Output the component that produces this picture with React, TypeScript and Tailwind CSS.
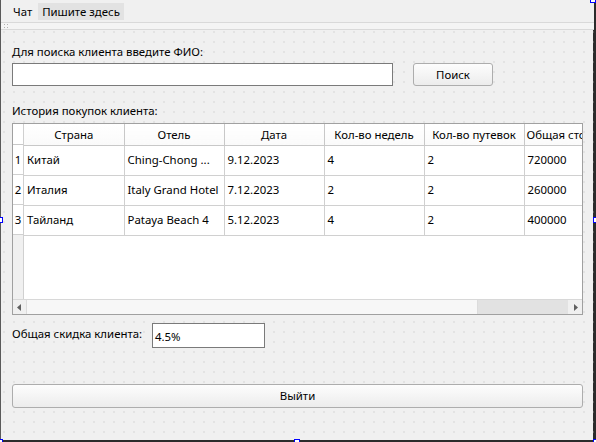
import React from 'react';

const rows = [
    { n: 1, country: 'Китай', hotel: 'Ching-Chong ...', date: '9.12.2023', weeks: '4', tickets: '2', total: '720000' },
    { n: 2, country: 'Италия', hotel: 'Italy Grand Hotel', date: '7.12.2023', weeks: '2', tickets: '2', total: '260000' },
    { n: 3, country: 'Тайланд', hotel: 'Pataya Beach 4', date: '5.12.2023', weeks: '4', tickets: '2', total: '400000' },
];

const headers = ['Страна', 'Отель', 'Дата', 'Кол-во недель', 'Кол-во путевок', 'Общая стоимость'];

function Handle({ className }: { className: string }) {
    return <div className={`absolute w-[6px] h-[6px] border border-[#0000ff] bg-white ${className}`} />;
}

export default function App() {
    return (
        <div className="relative w-[596px] h-[442px] overflow-hidden bg-[#f0f0f0] text-[11.4px] text-black font-['Noto_Sans',sans-serif]">
            <div className="flex h-full border-l border-[#5a5a5a] border-r-[3px] border-r-[#2b2b2b] border-b-[2px] border-b-[#2b2b2b]">
                <div className="flex flex-col flex-1">
                    {/* Menu bar */}
                    <div className="flex items-center h-[22px] px-[6px] bg-[#f0f0f0]">
                        <span className="px-[6px] leading-[17px]">Чат</span>
                        <span className="px-[4px] leading-[17px] bg-[#e2e2e2]">Пишите здесь</span>
                    </div>
                    <div className="flex h-[8px] border-y border-[#d9d9d9] bg-[#f4f4f4]">
                        <div className="w-[6px] ml-[2px] bg-[radial-gradient(#b0b0b0_0.7px,transparent_0.8px)] bg-[size:3px_3px]" />
                    </div>

                    {/* Form */}
                    <div className="flex-1 flex flex-col px-[11px] bg-[radial-gradient(circle,#c4c4c4_0,#c4c4c4_0.6px,transparent_0.75px)] bg-[size:10px_10px] bg-[position:-2px_-3px]">
                        <div className="mt-[14px] leading-[16px]">Для поиска клиента введите ФИО:</div>
                        <div className="flex mt-[3px] h-[23px]">
                            <div className="w-[381px] h-full bg-white border border-[#7a7a7a]" />
                            <button className="ml-[20px] w-[80px] h-full rounded-[3px] border border-[#adadad] bg-[linear-gradient(#fdfdfd,#ececec)]">
                                Поиск
                            </button>
                        </div>

                        <div className="mt-[17px] leading-[16px]">История покупок клиента:</div>
                        <div className="mt-[4px] w-[571px] h-[192px] bg-white border border-[#a0a0a0] flex flex-col">
                            <div className="flex-1 flex overflow-hidden">
                                <div className="w-[11px] bg-[#f0f0f0] flex flex-col border-r border-[#d0d0d0]">
                                    <div className="h-[21px] bg-white border-b border-[#c8c8c8]" />
                                    {rows.map((r) => (
                                        <div key={r.n} className="h-[30px] flex items-center justify-center border-b border-[#d0d0d0] bg-white">
                                            {r.n}
                                        </div>
                                    ))}
                                </div>
                                <div className="flex-1 overflow-hidden">
                                    <table className="border-collapse table-fixed w-[600px]">
                                        <colgroup>
                                            {headers.map((h) => (
                                                <col key={h} className="w-[100px]" />
                                            ))}
                                        </colgroup>
                                        <thead>
                                            <tr className="h-[21px]">
                                                {headers.map((h) => (
                                                    <th key={h} className="font-normal whitespace-nowrap overflow-hidden px-[2px] border-r border-b border-[#c8c8c8] bg-[linear-gradient(#ffffff,#fafafa)] text-center">
                                                        {h}
                                                    </th>
                                                ))}
                                            </tr>
                                        </thead>
                                        <tbody>
                                            {rows.map((r) => (
                                                <tr key={r.n} className="h-[30px]">
                                                    {[r.country, r.hotel, r.date, r.weeks, r.tickets, r.total].map((v, i) => (
                                                        <td key={i} className="px-[3px] whitespace-nowrap overflow-hidden border-r border-b border-[#d0d0d0]">
                                                            {v}
                                                        </td>
                                                    ))}
                                                </tr>
                                            ))}
                                        </tbody>
                                    </table>
                                </div>
                            </div>
                            {/* Horizontal scrollbar */}
                            <div className="h-[15px] flex items-stretch border-t border-[#d8d8d8] bg-[#f0f0f0]">
                                <div className="w-[13px] flex items-center justify-center">
                                    <svg width="5" height="7" viewBox="0 0 5 7"><path d="M4 0 L0 3.5 L4 7 Z" fill="#606060" /></svg>
                                </div>
                                <div className="w-[452px] bg-[#f7f7f7] border-x border-[#dcdcdc]" />
                                <div className="flex-1 bg-[#e2e2e2]" />
                                <div className="w-[14px] flex items-center justify-center">
                                    <svg width="5" height="7" viewBox="0 0 5 7"><path d="M1 0 L5 3.5 L1 7 Z" fill="#606060" /></svg>
                                </div>
                            </div>
                        </div>

                        <div className="flex items-center mt-[8px] h-[25px]">
                            <span className="w-[140px] leading-[16px] -mt-[4px]">Общая скидка клиента:</span>
                            <div className="w-[113px] h-full bg-white border border-[#7a7a7a] flex items-end pb-[2px] pl-[2px]">4.5%</div>
                        </div>

                        <button className="mt-[36px] w-[571px] h-[24px] rounded-[3px] border border-[#adadad] bg-[linear-gradient(#fdfdfd,#ececec)]">
                            Выйти
                        </button>
                    </div>
                </div>
            </div>

            <Handle className="right-0 -top-[3px]" />
            <Handle className="-left-[3px] top-[217px]" />
            <Handle className="-right-[3px] top-[217px]" />
            <Handle className="left-[294px] -bottom-[3px]" />
            <Handle className="-left-[3px] -bottom-[3px]" />
            <Handle className="-right-[3px] -bottom-[3px]" />
        </div>
    );
}
